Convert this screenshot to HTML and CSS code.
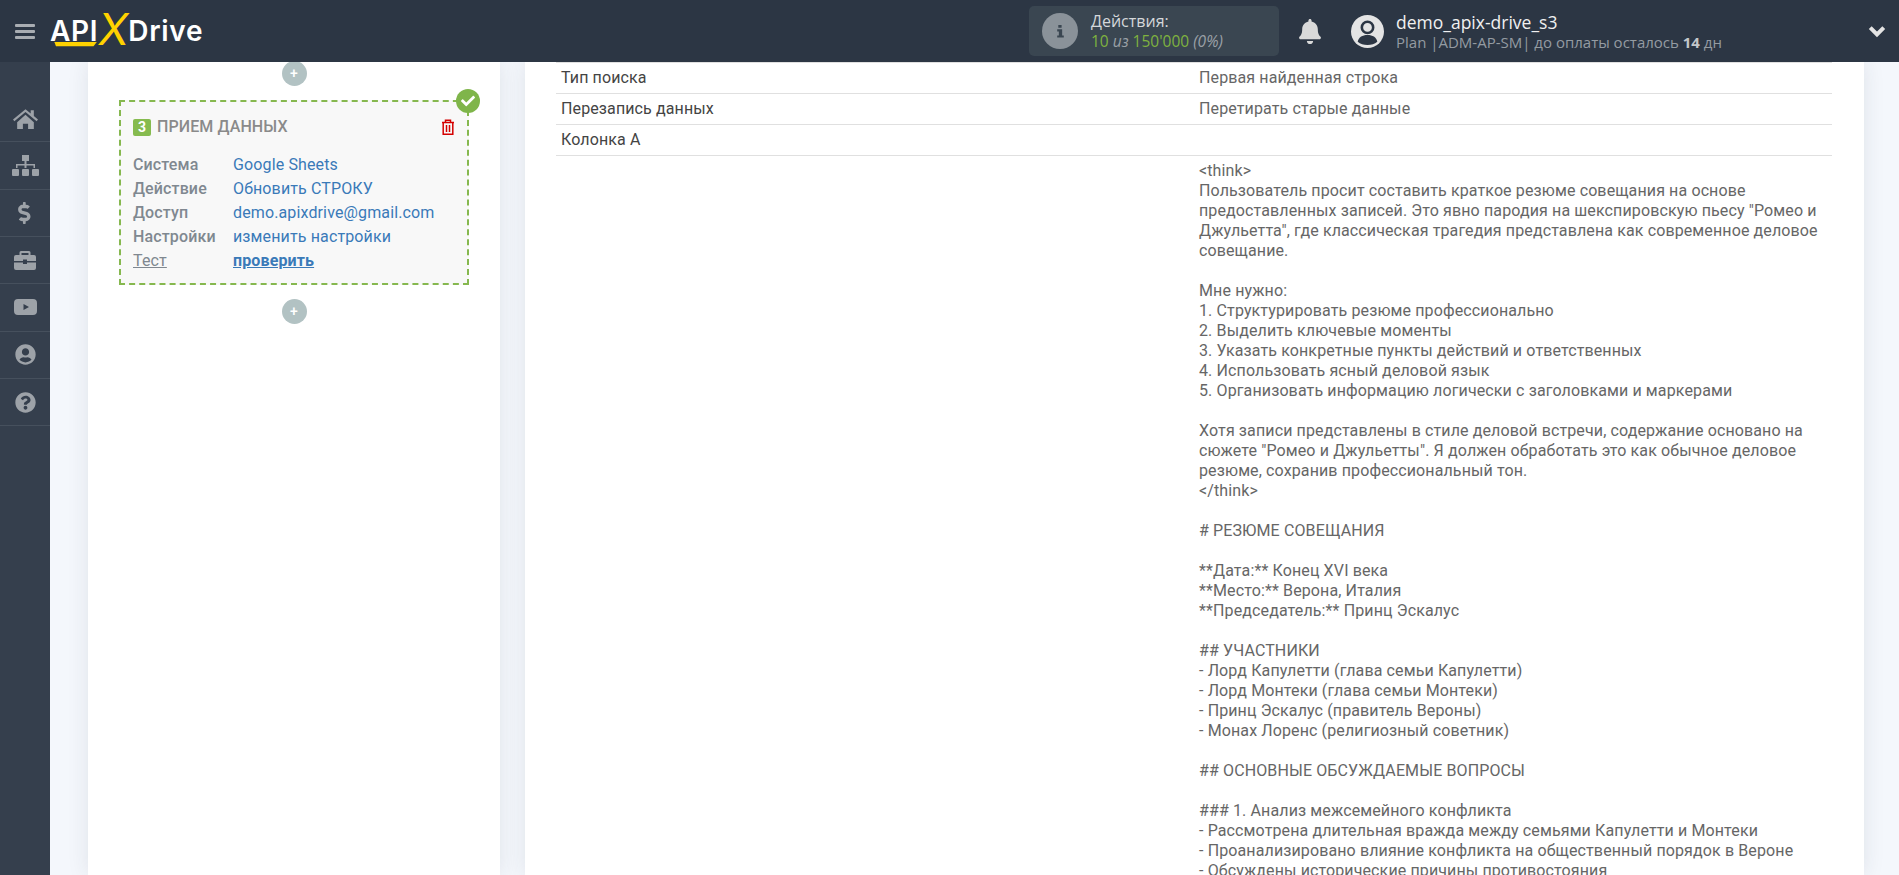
FILE: index.html
```html
<!DOCTYPE html>
<html lang="en">
<head>
  <meta charset="UTF-8">
  <title>ApiX-Drive</title>
  <link rel="stylesheet" href="styles.css">
</head>
<body>

<header class="topbar">
  <div class="burger"><span></span><span></span><span></span></div>
  <div class="logo">
    <span class="logo-api">API</span><span class="logo-x">X</span><span class="logo-drive">Drive</span>
    <svg class="logo-line" viewBox="0 0 52 6"><polygon points="0,0 51,0 47,5 2,5" fill="#ffd200"/></svg>
  </div>

  <div class="top-right">
    <div class="actions">
      <div class="info-icon"><svg viewBox="0 0 20 24" width="11" height="18"><path d="M6 1h6v5H6zM4 9h9v11h3v4H4v-4h3v-7H4z" fill="#3a4651"/></svg></div>
      <div>
        <div class="actions-title">Действия:</div>
        <div class="actions-count"><b>10</b> <i>из</i> <b>150'000</b> <i>(0%)</i></div>
      </div>
    </div>
    <svg class="bell" viewBox="0 0 448 512"><path fill="#d9d9d9" d="M224 512c35.32 0 63.97-28.65 63.97-64H160.03c0 35.35 28.65 64 63.97 64zm215.39-149.71c-19.32-20.76-55.47-51.99-55.47-154.29 0-77.7-54.48-139.9-127.94-155.16V32c0-17.67-14.32-32-31.98-32s-31.98 14.33-31.98 32v20.84C118.56 68.1 64.08 130.3 64.08 208c0 102.3-36.15 133.53-55.47 154.29-6 6.45-8.66 14.16-8.61 21.71.11 16.4 12.98 32 32.1 32h383.8c19.12 0 32-15.6 32.1-32 .05-7.55-2.61-15.27-8.61-21.71z"/></svg>
    <svg class="avatar" viewBox="0 0 32 32">
      <circle cx="16" cy="16" r="16" fill="#e4e4e4"/>
      <circle cx="16" cy="12" r="5.500" fill="#e4e4e4" stroke="#2c3644" stroke-width="2.500"/>
      <path d="M6.500 26c1-4.500 4.500-6.500 9.500-6.500s8.500 2 9.500 6.500c-2.500 2-5.800 3.200-9.500 3.200s-7-1.200-9.500-3.200z" fill="#2c3644"/>
    </svg>
    <div class="user">
      <div class="user-name">demo_apix-drive_s3</div>
      <div class="user-plan">Plan |ADM-AP-SM| до оплаты осталось <b>14</b> дн</div>
    </div>
    <svg class="chevron" viewBox="0 0 16 12"><path d="M2 3l6 6 6-6" fill="none" stroke="#e4e4e4" stroke-width="3.6"/></svg>
  </div>
</header>

<div class="layout">
  <nav class="sidebar">
    <a class="side-item"><svg viewBox="0 0 24 20" width="25" height="21"><path d="M12 1L0 11l1.300 1.600L12 3.800l10.700 8.800L24 11l-4-3.300V2h-3v3.200zM4 13.500V20h5.500v-5h5v5H20v-6.500L12 6.500z"/></svg></a>
    <a class="side-item"><svg viewBox="0 0 27 21" width="27" height="21"><path d="M10 0h7v6h-2.500v3H23v4h-1.500v-2.500h-7V13H12.500v-2.500h-7V13H4V9h8.500V6H10zM1 14h5a1 1 0 0 1 1 1v5a1 1 0 0 1-1 1H1a1 1 0 0 1-1-1v-5a1 1 0 0 1 1-1zm10 0h5a1 1 0 0 1 1 1v5a1 1 0 0 1-1 1h-5a1 1 0 0 1-1-1v-5a1 1 0 0 1 1-1zm10 0h5a1 1 0 0 1 1 1v5a1 1 0 0 1-1 1h-5a1 1 0 0 1-1-1v-5a1 1 0 0 1 1-1z"/></svg></a>
    <a class="side-item"><svg viewBox="0 0 320 512" width="14" height="22"><path d="M209.2 233.4l-108-31.6C88.7 198.2 80 186.5 80 173.5c0-16.3 13.2-29.5 29.5-29.5h66.3c12.2 0 24.2 3.7 34.2 10.5 6.1 4.1 14.3 3.1 19.5-2l34.8-34c7.1-6.9 6.1-18.4-1.8-24.5C238 74.8 207.4 64.1 176 64V16c0-8.8-7.2-16-16-16h-32c-8.8 0-16 7.2-16 16v48h-2.5C45.8 64-5.4 118.7.5 183.6c4.2 46.1 39.4 83.6 83.8 96.6l102.5 30c12.5 3.7 21.2 15.3 21.2 28.3 0 16.3-13.2 29.5-29.5 29.5h-66.3C100 368 88 364.3 78 357.5c-6.1-4.100-14.3-3.100-19.5 2l-34.8 34c-7.100 6.900-6.100 18.400 1.800 24.500 24.500 19.200 55.100 29.900 86.500 30v48c0 8.800 7.200 16 16 16h32c8.800 0 16-7.200 16-16v-48.200c46.600-.9 90.300-28.600 105.700-72.700 21.500-61.600-14.600-124.800-72.500-141.700z"/></svg></a>
    <a class="side-item"><svg viewBox="0 0 22 19" width="22" height="19"><path d="M7 0h8a1.500 1.500 0 0 1 1.500 1.500V4H20a2 2 0 0 1 2 2v4H13V8.500H9V10H0V6a2 2 0 0 1 2-2h3.500V1.500A1.500 1.500 0 0 1 7 0zm.5 2v2h7V2zM0 11.500h9V13h4v-1.500h9V17a2 2 0 0 1-2 2H2a2 2 0 0 1-2-2z"/></svg></a>
    <a class="side-item"><svg viewBox="0 0 23 16" width="23" height="16"><path fill-rule="evenodd" d="M4 0h15a4 4 0 0 1 4 4v8a4 4 0 0 1-4 4H4a4 4 0 0 1-4-4V4a4 4 0 0 1 4-4zm5.500 5v6l5.500-3z"/></svg></a>
    <a class="side-item"><svg viewBox="0 0 496 512" width="21" height="21"><path d="M248 8C111 8 0 119 0 256s111 248 248 248 248-111 248-248S385 8 248 8zm0 96c48.6 0 88 39.4 88 88s-39.4 88-88 88-88-39.4-88-88 39.4-88 88-88zm0 344c-58.7 0-111.3-26.6-146.5-68.2 18.8-35.4 55.6-59.8 98.5-59.8 2.4 0 4.8.4 7.1 1.1 13 4.2 26.6 6.9 40.9 6.9 14.3 0 28-2.7 40.9-6.9 2.3-.7 4.7-1.1 7.1-1.1 42.9 0 79.7 24.4 98.5 59.8C359.3 421.4 306.7 448 248 448z"/></svg></a>
    <a class="side-item"><svg viewBox="0 0 512 512" width="21" height="21"><path d="M504 256c0 136.997-111.043 248-248 248S8 392.997 8 256C8 119.083 119.043 8 256 8s248 111.083 248 248zM262.655 90c-54.497 0-89.255 22.957-116.549 63.758-3.536 5.286-2.353 12.415 2.715 16.258l34.699 26.31c5.205 3.947 12.621 3.008 16.665-2.122 17.864-22.658 30.113-35.797 57.303-35.797 20.429 0 45.698 13.148 45.698 32.958 0 14.976-12.363 22.667-32.534 33.976C247.128 238.528 216 254.941 216 296v4c0 6.627 5.373 12 12 12h56c6.627 0 12-5.373 12-12v-1.333c0-28.462 83.186-29.647 83.186-106.667 0-58.002-60.165-102-116.531-102zM256 338c-25.365 0-46 20.635-46 46 0 25.364 20.635 46 46 46s46-20.636 46-46c0-25.365-20.635-46-46-46z"/></svg></a>
  </nav>

  <main class="content">
    <section class="flow-panel">
      <div class="add-btn top">+</div>
      <div class="step-card">
        <div class="step-ok"><svg viewBox="0 0 512 512" width="14" height="14"><path fill="#fff" d="M173.898 439.404l-166.4-166.4c-9.997-9.997-9.997-26.206 0-36.204l36.203-36.204c9.997-9.998 26.207-9.998 36.204 0L192 312.69 432.095 72.596c9.997-9.997 26.207-9.997 36.204 0l36.203 36.204c9.997 9.997 9.997 26.206 0 36.204l-294.4 294.401c-9.998 9.997-26.207 9.997-36.204-.001z"/></svg></div>
        <div class="step-head">
          <span class="step-num">3</span>
          <span class="step-title">ПРИЕМ ДАННЫХ</span>
          <svg class="trash" viewBox="0 0 14 16" width="14" height="16"><path d="M1 3.500h12M4.500 3.500V1.200h5v2.300M2.200 3.500v11.800h9.600V3.500M5.500 6v7M8.500 6v7" fill="none" stroke="#d40000" stroke-width="1.500"/></svg>
        </div>
        <div class="step-rows">
          <span class="step-label">Система</span><a class="step-value">Google Sheets</a>
          <span class="step-label">Действие</span><a class="step-value">Обновить СТРОКУ</a>
          <span class="step-label">Доступ</span><a class="step-value">demo.apixdrive@gmail.com</a>
          <span class="step-label">Настройки</span><a class="step-value">изменить настройки</a>
          <span class="step-label test">Тест</span><a class="step-value check">проверить</a>
        </div>
      </div>
      <div class="add-btn">+</div>
    </section>

    <section class="data-panel">
      <div class="data-row"><div class="data-key">Тип поиска</div><div class="data-val">Первая найденная строка</div></div>
      <div class="data-row"><div class="data-key">Перезапись данных</div><div class="data-val">Перетирать старые данные</div></div>
      <div class="data-row"><div class="data-key">Колонка А</div><div class="data-val"></div></div>
      <div class="data-row plain"><div class="data-key"></div><div class="data-val long">&lt;think&gt;
Пользователь просит составить краткое резюме совещания на основе предоставленных записей. Это явно пародия на шекспировскую пьесу "Ромео и Джульетта", где классическая трагедия представлена как современное деловое совещание.

Мне нужно:
1. Структурировать резюме профессионально
2. Выделить ключевые моменты
3. Указать конкретные пункты действий и ответственных
4. Использовать ясный деловой язык
5. Организовать информацию логически с заголовками и маркерами

Хотя записи представлены в стиле деловой встречи, содержание основано на сюжете "Ромео и Джульетты". Я должен обработать это как обычное деловое резюме, сохранив профессиональный тон.
&lt;/think&gt;

# РЕЗЮМЕ СОВЕЩАНИЯ

**Дата:** Конец XVI века
**Место:** Верона, Италия
**Председатель:** Принц Эскалус

## УЧАСТНИКИ
- Лорд Капулетти (глава семьи Капулетти)
- Лорд Монтеки (глава семьи Монтеки)
- Принц Эскалус (правитель Вероны)
- Монах Лоренс (религиозный советник)

## ОСНОВНЫЕ ОБСУЖДАЕМЫЕ ВОПРОСЫ

### 1. Анализ межсемейного конфликта
- Рассмотрена длительная вражда между семьями Капулетти и Монтеки
- Проанализировано влияние конфликта на общественный порядок в Вероне
- Обсуждены исторические причины противостояния</div></div>
    </section>
  </main>
</div>

</body>
</html>
```

FILE: styles.css
```css
html, body {
  margin: 0;
  height: 100%;
  overflow: hidden;
}
body {
  font-family: Roboto, "Liberation Sans", sans-serif;
  font-size: 16px;
  line-height: 20px;
  color: #666;
  background: #f4f7fc;
}

/* Top bar */
.topbar {
  height: 62px;
  background: #2c3644;
  display: flex;
  align-items: center;
  font-family: "Open Sans", sans-serif;
}
.burger {
  width: 20px;
  margin-left: 15px;
  display: flex;
  flex-direction: column;
  gap: 3px;
}
.burger span {
  height: 3px;
  background: #a9adb2;
  border-radius: 1px;
}
.logo {
  position: relative;
  margin-left: 15px;
  display: flex;
  align-items: center;
  height: 62px;
  color: #fff;
  font-family: Inter, sans-serif;
  font-weight: 600;
  font-size: 28px;
  letter-spacing: 0.7px;
}
.logo-x {
  color: #ffd200;
  font-size: 44px;
  font-weight: 400;
  letter-spacing: 0;
  margin: -4px -1px 0 1px;
  transform: skewX(-8deg);
}
.logo-line {
  position: absolute;
  left: 0;
  top: 42px;
  width: 52px;
  height: 5px;
}
.top-right {
  margin-left: auto;
  display: flex;
  align-items: center;
  height: 62px;
}
.actions {
  width: 250px;
  height: 50px;
  box-sizing: border-box;
  background: #3a4651;
  border-radius: 5px;
  display: flex;
  align-items: center;
  padding-left: 13px;
  gap: 13px;
  color: #d4d7da;
  font-size: 15.5px;
  line-height: 20px;
}
.info-icon {
  width: 36px;
  height: 36px;
  border-radius: 50%;
  background: #8a9299;
  display: flex;
  align-items: center;
  justify-content: center;
}
.actions-title { font-size: 16px; }
.actions-count { color: #9aa1a7; }
.actions-count b { font-weight: 400; color: #7fb23f; }
.bell {
  width: 22px;
  height: 25px;
  margin-left: 20px;
}
.avatar {
  width: 33px;
  height: 33px;
  margin-left: 30px;
}
.user {
  width: 472px;
  margin-left: 12px;
}
.user-name {
  color: #f0f0f0;
  font-size: 17.5px;
  line-height: 22px;
}
.user-plan {
  color: #949ba2;
  font-size: 15px;
  line-height: 19px;
}
.user-plan b { font-weight: 700; color: #c4c7ca; }
.chevron {
  width: 18px;
  height: 14px;
  margin-right: 13px;
}

.layout {
  display: flex;
  height: calc(100vh - 62px);
}

/* Sidebar */
.sidebar {
  width: 50px;
  flex: none;
  background: #353f4d;
  padding-top: 33px;
  box-sizing: border-box;
}
.side-item {
  height: 47.33px;
  border-bottom: 1px solid #46505d;
  display: flex;
  align-items: center;
  justify-content: center;
  box-sizing: border-box;
}
.side-item svg { fill: #9da2a8; }

/* Content */
.content {
  flex: 1;
  display: flex;
  padding: 0 35px 0 38px;
  gap: 25px;
  background: #f4f7fc;
  overflow: hidden;
}
.flow-panel, .data-panel {
  background: #fff;
  box-shadow: 0 0 20px rgba(40, 50, 60, 0.1);
}
.flow-panel {
  width: 412px;
  flex: none;
  display: flex;
  flex-direction: column;
  align-items: center;
}
.add-btn {
  width: 25px;
  height: 25px;
  border-radius: 50%;
  background: #b2c2c3;
  color: #fff;
  font-size: 14px;
  font-weight: 500;
  line-height: 24px;
  text-align: center;
  margin-top: 14px;
}
.add-btn.top { margin-top: -1px; }
.step-card {
  position: relative;
  width: 350px;
  height: 185px;
  box-sizing: border-box;
  margin-top: 14px;
  border: 2px dashed #86b84f;
  background: #f8f8f8;
  padding: 14px 12px 0;
}
.step-ok {
  position: absolute;
  top: -13px;
  right: -13px;
  width: 24px;
  height: 24px;
  border-radius: 50%;
  background: #7fb54a;
  display: flex;
  align-items: center;
  justify-content: center;
}
.step-head {
  display: flex;
  align-items: center;
  height: 22px;
}
.step-num {
  width: 18px;
  height: 17px;
  border-radius: 2px;
  background: #86bb4f;
  color: #fff;
  font-size: 14px;
  font-weight: 700;
  line-height: 17px;
  text-align: center;
}
.step-title {
  margin-left: 6px;
  font-size: 16px;
  font-weight: 500;
  letter-spacing: 0.1px;
  color: #8a8a8a;
}
.trash { margin-left: auto; }
.step-rows {
  margin-top: 15px;
  display: grid;
  grid-template-columns: 100px 1fr;
  grid-auto-rows: 24px;
  align-items: center;
  letter-spacing: 0.13px;
}
.step-label { color: #808890; font-weight: 500; }
.step-label.test { text-decoration: underline; font-weight: 400; }
.step-value { color: #3a7ab8; }
.step-value.check { font-weight: 700; text-decoration: underline; }

.data-panel {
  flex: 1;
  padding: 0 32px 0 31px;
  letter-spacing: 0.12px;
}
.data-row {
  display: grid;
  grid-template-columns: 1fr 1fr;
  border-top: 1px solid #e0e0e0;
}
.data-row > div {
  padding: 5px;
  min-height: 20px;
}
.data-key { color: #444; }
.data-val { color: #666; }
.data-val.long { white-space: pre-wrap; }
```
